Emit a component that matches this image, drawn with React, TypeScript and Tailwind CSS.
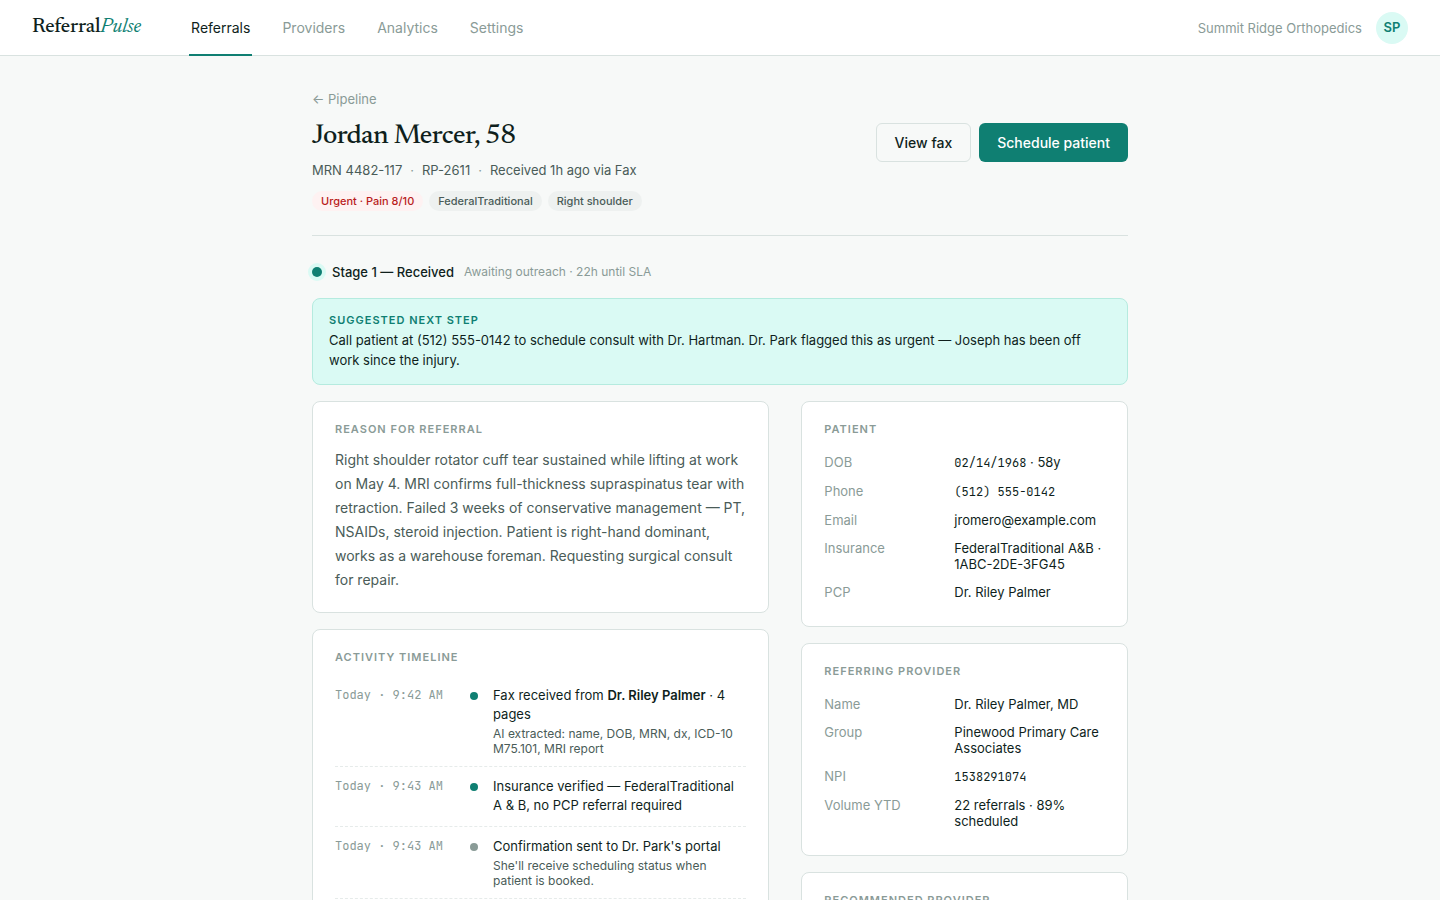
import React from 'react'

const serif = "font-['Newsreader','Liberation_Serif',serif]"
const mono = "font-['JetBrains_Mono','Liberation_Mono',monospace]"

const navItems = ['Referrals', 'Providers', 'Analytics', 'Settings']

const tags = [
  { label: 'Urgent · Pain 8/10', urgent: true },
  { label: 'FederalTraditional', urgent: false },
  { label: 'Right shoulder', urgent: false },
]

const patient = [
  { label: 'DOB', code: '02/14/1968', value: ' · 58y' },
  { label: 'Phone', code: '(512) 555-0142' },
  { label: 'Email', value: 'jromero@example.com' },
  { label: 'Insurance', value: 'FederalTraditional A&B · 1ABC-2DE-3FG45' },
  { label: 'PCP', value: 'Dr. Riley Palmer' },
]

const provider = [
  { label: 'Name', value: 'Dr. Riley Palmer, MD' },
  { label: 'Group', value: 'Pinewood Primary Care Associates' },
  { label: 'NPI', code: '1538291074' },
  { label: 'Volume YTD', value: '22 referrals · 89% scheduled' },
]

const events = [
  {
    time: 'Today · 9:42 AM',
    done: true,
    title: <>Fax received from <strong className="font-semibold">Dr. Riley Palmer</strong> · 4 pages</>,
    note: 'AI extracted: name, DOB, MRN, dx, ICD-10 M75.101, MRI report',
  },
  {
    time: 'Today · 9:43 AM',
    done: true,
    title: 'Insurance verified — FederalTraditional A & B, no PCP referral required',
  },
  {
    time: 'Today · 9:43 AM',
    done: false,
    title: "Confirmation sent to Dr. Park's portal",
    note: "She'll receive scheduling status when patient is booked.",
  },
]

type Field = { label: string; code?: string; value?: string }

const Card = ({ title, children }: { title: string; children?: React.ReactNode }) => (
  <section className="rounded-lg border border-[#d9e2e0] bg-white px-[22px] py-5">
    <h2 className="mb-3 text-[11px] leading-[14px] font-semibold tracking-[1px] text-[#8a9b97] uppercase">
      {title}
    </h2>
    {children}
  </section>
)

const Fields = ({ items }: { items: Field[] }) => (
  <dl className="text-[13px]">
    {items.map((item) => (
      <div
        key={item.label}
        className={`flex py-1.5 ${item.code ? 'leading-[17px]' : 'leading-4'}`}
      >
        <dt className="w-[130px] shrink-0 text-[#8a9b97]">{item.label}</dt>
        <dd className="min-w-0 flex-1">
          {item.code && <span className={`text-xs leading-4 ${mono}`}>{item.code}</span>}
          {item.value}
        </dd>
      </div>
    ))}
  </dl>
)

const Header = () => (
  <header className="flex h-14 items-center border-b border-[#d9e2e0] bg-white px-8">
    <a href="#" className={`mr-12 text-[21px] leading-7 font-medium tracking-[-0.01em] ${serif}`}>
      Referral<em className="font-normal text-[#0f7f72]">Pulse</em>
    </a>
    <nav className="flex gap-7 self-stretch text-sm">
      {navItems.map((item, i) => (
        <a
          key={item}
          href="#"
          className={`-mb-px flex items-center border-b-2 px-0.5 pt-0.5 ${
            i === 0 ? 'border-[#0f7f72]' : 'border-transparent text-[#8a9b97]'
          }`}
        >
          {item}
        </a>
      ))}
    </nav>
    <div className="ml-auto flex items-center gap-3.5">
      <span className="text-[13px] leading-4 text-[#8a9b97]">Summit Ridge Orthopedics</span>
      <button className="size-8 rounded-full bg-[#dafaf4] text-[13px] font-semibold text-[#0f7f72]">
        SP
      </button>
    </div>
  </header>
)

const App = () => {
  return (
    <div className="min-h-screen bg-[#f7f9f8] font-['Inter','Liberation_Sans',sans-serif] text-[#0f1f1c]">
      <Header />

      <main className="mx-auto max-w-[880px] px-8 pt-9 pb-16">
        <a href="#" className="block text-[13px] leading-[15px] text-[#8a9b97]">← Pipeline</a>

        <div className="flex items-start justify-between border-b border-[#d9e2e0] pb-6">
          <div className="pt-[11px]">
            <h1 className={`text-[28px] leading-9 font-medium tracking-[-0.02em] ${serif}`}>
              Jordan Mercer, 58
            </h1>
            <p className="mt-2 flex gap-2 text-[13px] leading-4 text-[#4a5c58]">
              <span>MRN 4482-117</span>
              <span className="text-[#8a9b97]">·</span>
              <span>RP-2611</span>
              <span className="text-[#8a9b97]">·</span>
              <span>Received 1h ago via Fax</span>
            </p>
            <ul className="mt-[13px] flex gap-1.5 text-[11px] leading-5 font-medium">
              {tags.map((tag) => (
                <li
                  key={tag.label}
                  className={`rounded-full px-[9px] ${
                    tag.urgent ? 'bg-[#fef2f2] text-[#b91c1c]' : 'bg-[#eef1f0] text-[#4a5c58]'
                  }`}
                >
                  {tag.label}
                </li>
              ))}
            </ul>
          </div>
          <div className="mt-4 flex gap-2 text-sm font-medium">
            <button className="h-[39px] rounded-md border border-[#d9e2e0] px-[18px]">
              View fax
            </button>
            <button className="h-[39px] rounded-md bg-[#0f7f72] px-[18px] text-white">
              Schedule patient
            </button>
          </div>
        </div>

        <div className="mt-7 flex items-center gap-2.5 leading-4">
          <span className="size-2.5 rounded-full bg-[#0f7f72] ring-4 ring-[#dafaf4]" />
          <span className="text-[13px] font-medium">Stage 1 — Received</span>
          <span className="text-xs leading-4 text-[#8a9b97]">Awaiting outreach · 22h until SLA</span>
        </div>

        <div className="mt-[18px] rounded-lg border border-[#b5ebdf] bg-[#dafaf4] px-4 py-3.5">
          <h2 className="text-[11px] leading-[14px] font-semibold tracking-[1px] text-[#0f7f72] uppercase">
            Suggested next step
          </h2>
          <p className="mt-[3px] text-[13px] leading-5">
            Call patient at (512) 555-0142 to schedule consult with Dr. Hartman. Dr. Park flagged this
            as urgent — Joseph has been off work since the injury.
          </p>
        </div>

        <div className="mt-4 grid grid-cols-[1.4fr_1fr] items-start gap-8">
          <div className="flex flex-col gap-4">
            <Card title="Reason for referral">
              <p className="text-sm leading-6 text-[#4a5c58]">
                Right shoulder rotator cuff tear sustained while lifting at work on May 4. MRI confirms
                full-thickness supraspinatus tear with retraction. Failed 3 weeks of conservative
                management — PT, NSAIDs, steroid injection. Patient is right-hand dominant, works as a
                warehouse foreman. Requesting surgical consult for repair.
              </p>
            </Card>

            <Card title="Activity timeline">
              <ol>
                {events.map((event, i) => (
                  <li
                    key={i}
                    className="flex min-h-[60px] gap-[15px] border-b border-dashed border-[#e6ebea] py-2.5 text-[13px] leading-[19px]"
                  >
                    <time className={`w-[120px] shrink-0 text-xs leading-[19px] text-[#8a9b97] ${mono}`}>
                      {event.time}
                    </time>
                    <span
                      className={`mt-1.5 size-2 shrink-0 rounded-full ${
                        event.done ? 'bg-[#0f7f72]' : 'bg-[#8a9b97]'
                      }`}
                    />
                    <div className="min-w-0 flex-1">
                      <p>{event.title}</p>
                      {event.note && (
                        <p className="mt-0.5 text-xs leading-[15px] text-[#4a5c58]">{event.note}</p>
                      )}
                    </div>
                  </li>
                ))}
              </ol>
            </Card>
          </div>

          <div className="flex flex-col gap-4">
            <Card title="Patient">
              <Fields items={patient} />
            </Card>
            <Card title="Referring provider">
              <Fields items={provider} />
            </Card>
            <Card title="Recommended provider" />
          </div>
        </div>
      </main>
    </div>
  )
}

export default App
